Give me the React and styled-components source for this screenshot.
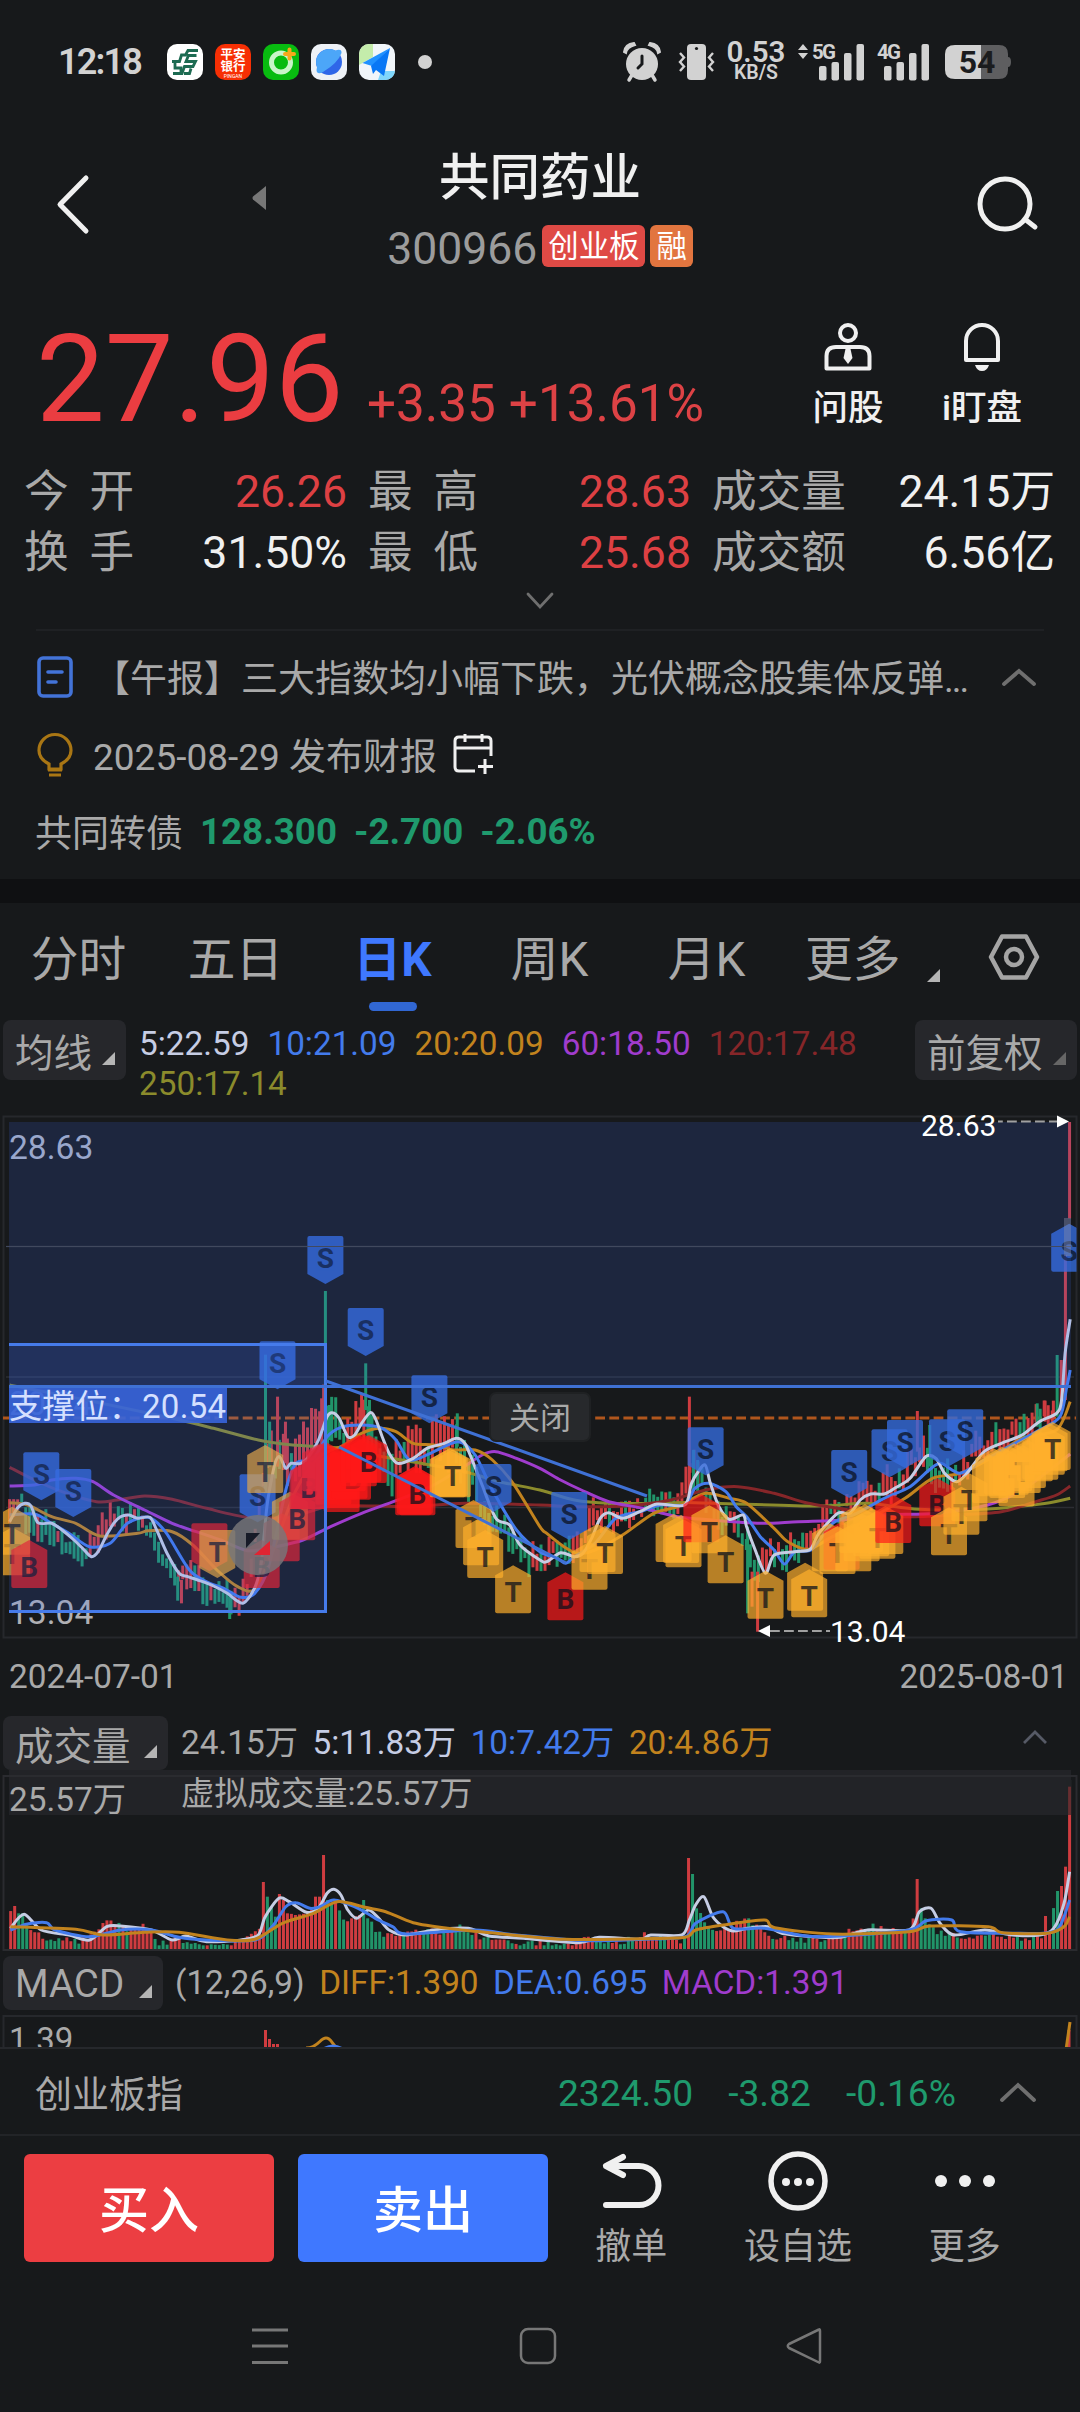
import React from "react";
import styled, { createGlobalStyle } from "styled-components";

const c = {
  bg: "#17191b",
  line: "#26282c",
  chip: "#26272b",
  grey: "#a9a9a9",
  white: "#f0f0f0",
  red: "#eb3d41",
  up: "#cf3c40",
  down: "#219469",
  green: "#1f9a6d",
  blue: "#3f78ff",
  ma5: "#c6cde4",
  ma10: "#437bec",
  ma20: "#c2831e",
  ma60: "#a03ccd",
  ma120: "#862629",
  ma250: "#8b8b2c",
};

const Global = createGlobalStyle`
  * { box-sizing: border-box; }
  body { margin: 0; background: ${c.bg}; }
  svg { display: block; flex: none; overflow: visible; }
`;

const Screen = styled.div`
  width: 1080px;
  height: 2412px;
  overflow: hidden;
  background: ${c.bg};
  color: ${c.grey};
  font-family: Roboto, "Noto Sans CJK SC", sans-serif;
  display: flex;
  flex-direction: column;
  white-space: nowrap;
`;

/* ---------- status bar ---------- */
const StatusBar = styled.div`
  height: 124px;
  flex: none;
  display: flex;
  align-items: center;
  padding: 0 68px 0 58px;
  color: #d2d2d2;
`;
const Clock = styled.div`
  width: 109px;
  font-size: 36px;
  font-weight: 600;
  letter-spacing: -1.8px;
`;
const AppIcons = styled.div`
  display: flex;
  align-items: center;
  gap: 12px;
  flex: 1;
`;
const BankIcon = styled.div`
  width: 36px;
  height: 36px;
  border-radius: 10px;
  background: #f72f04;
  color: #fff;
  font-size: 12.5px;
  font-weight: 700;
  line-height: 12px;
  text-align: center;
  padding-top: 5px;
`;
const BankLatin = styled.div`
  font-size: 5px;
  line-height: 7px;
  font-weight: 400;
`;
const Dot = styled.div`
  width: 14px;
  height: 14px;
  border-radius: 50%;
  background: #d2d2d2;
  margin-left: 11px;
`;
const SpeedBox = styled.div`
  width: 60px;
  margin: 0 12px 0 10px;
  text-align: center;
  font-weight: 600;
`;
const Speed = styled.div`
  font-size: 29.5px;
  line-height: 22px;
  margin-top: 0;
`;
const Unit = styled.div`
  font-size: 19.5px;
  line-height: 20px;
`;

/* ---------- header ---------- */
const Header = styled.div`
  height: 166px;
  flex: none;
  display: grid;
  grid-template-columns: 300px 1fr 300px;
  padding-top: 22px;
`;
const HeaderLeft = styled.div`
  display: flex;
  padding: 29px 0 0 56px;
`;
const HeaderRight = styled.div`
  display: flex;
  justify-content: flex-end;
  padding: 30px 40px 0 0;
`;
const TitleBox = styled.div`
  display: flex;
  flex-direction: column;
  align-items: center;
`;
const Title = styled.div`
  font-size: 50.5px;
  font-weight: 500;
  line-height: 63px;
  color: ${c.white};
`;
const CodeRow = styled.div`
  display: flex;
  align-items: flex-start;
  height: 42px;
  margin-top: 16px;
  gap: 5px;
`;
const Code = styled.span`
  font-size: 44.5px;
  line-height: 48px;
  color: #9c9c9c;
`;
const Tag = styled.span`
  height: 42px;
  padding: 0 6px;
  border-radius: 6px;
  background: ${(p) => p.$bg};
  color: #fff;
  font-size: 30.4px;
  line-height: 43px;
`;

/* ---------- quote ---------- */
const Quote = styled.div`
  height: 172px;
  flex: none;
  display: flex;
  padding: 27px 31px 0 36px;
  justify-content: space-between;
`;
const Prices = styled.div`
  display: flex;
  align-items: baseline;
  color: ${c.red};
  height: 124px;
`;
const Price = styled.span`
  font-size: 122.5px;
  line-height: 124px;
  width: 331px;
`;
const Change = styled.span`
  font-size: 51.2px;
  margin-right: 13px;
  color: #dd4245;
`;
const Actions = styled.div`
  display: flex;
  padding-top: 6px;
`;
const Action = styled.div`
  width: 134px;
  display: flex;
  flex-direction: column;
  align-items: center;
  color: ${c.white};
  font-size: 35.5px;
  font-weight: 500;
  line-height: 44px;
  gap: 15px;
`;

const Stats = styled.div`
  flex: none;
  display: grid;
  grid-template-columns: 323px 323px 343px;
  grid-auto-rows: 61px;
  column-gap: 21px;
  padding-left: 24px;
  font-size: 44.6px;
  line-height: 61px;
`;
const Stat = styled.div`
  display: flex;
  justify-content: space-between;
`;
const StatLabel = styled.span`
  display: flex;
  justify-content: space-between;
  min-width: 110px;
`;
const StatValue = styled.span`
  color: ${(p) => (p.$up ? "#dd4043" : c.white)};
`;
const Expand = styled.div`
  height: 47px;
  flex: none;
  display: flex;
  justify-content: center;
  align-items: flex-start;
  padding-top: 8px;
  margin: 0 36px;
  border-bottom: 2px solid #1f2124;
`;

/* ---------- news ---------- */
const News = styled.div`
  height: 248px;
  flex: none;
  padding: 7px 44px 0 36px;
  font-size: 37px;
`;
const NewsRow = styled.div`
  height: ${(p) => p.$h || 78}px;
  display: flex;
  align-items: center;
`;
const NewsText = styled.span`
  margin-left: 19px;
  margin-top: -3px;
  flex: ${(p) => (p.$grow ? 1 : "none")};
`;
const Dots = styled.span`
  letter-spacing: -2px;
`;
const BondName = styled.span`
  margin-left: -1px;
`;
const BondValue = styled.b`
  color: ${c.green};
  font-size: 36.7px;
  margin-left: 17px;
`;
const Band = styled.div`
  height: 24px;
  flex: none;
  background: #0f1012;
`;

/* ---------- tabs ---------- */
const Tabs = styled.div`
  height: 113px;
  flex: none;
  display: flex;
  padding-top: 22px;
`;
const Tab = styled.div`
  width: ${(p) => (p.$auto ? "auto" : "157px")};
  font-size: 47.7px;
  line-height: 71px;
  display: flex;
  flex-direction: column;
  align-items: center;
  color: ${(p) => (p.$on ? c.blue : c.grey)};
  font-weight: ${(p) => (p.$on ? 700 : 400)};
`;
const Underline = styled.div`
  width: 48px;
  height: 9px;
  border-radius: 5px;
  background: #3167d3;
  margin-top: 6px;
`;
const MoreTab = styled.div`
  display: flex;
  align-items: center;
  justify-content: space-between;
  width: 155px;
  height: 71px;
  padding-left: 20px;
`;

/* ---------- indicator rows ---------- */
const IndicatorRow = styled.div`
  flex: none;
  height: ${(p) => p.$h}px;
  display: flex;
  align-items: flex-start;
  padding: 4px 3px 0;
`;
const Chip = styled.div`
  flex: none;
  width: ${(p) => p.$w}px;
  height: ${(p) => p.$h || 54}px;
  background: ${c.chip};
  border-radius: 8px;
  padding: 0 11px 0 12px;
  display: flex;
  justify-content: space-between;
  align-items: center;
  font-size: 38.5px;
`;
const Corner = styled.i`
  width: 0;
  height: 0;
  margin-top: ${(p) => p.$mt || 17}px;
  border-left: 13px solid transparent;
  border-bottom: 13px solid ${(p) => (p.$dim ? "#666" : "#b5b5b5")};
`;
const Values = styled.div`
  flex: 1;
  display: flex;
  flex-wrap: wrap;
  column-gap: ${(p) => p.$gap || 14.5}px;
  margin-left: ${(p) => p.$ml || 13}px;
  padding-top: ${(p) => p.$pt || 3}px;
  font-size: 33.3px;
  line-height: 40px;
`;
const Value = styled.span`
  color: ${(p) => p.$c};
`;

/* ---------- charts ---------- */
const ChartBox = styled.div`
  position: relative;
  flex: none;
  height: 534px;
`;
const CloseButton = styled.div`
  position: absolute;
  left: 489px;
  top: 280px;
  width: 102px;
  height: 50px;
  border: 2px solid #1f2123;
  border-radius: 7px;
  background: #27292c;
  font-size: 31px;
  line-height: 50px;
  text-align: center;
`;
const Dates = styled.div`
  flex: none;
  height: 66px;
  display: flex;
  justify-content: space-between;
  padding: 0 12px 0 9px;
  font-size: 33.4px;
  line-height: 61px;
`;
const MacdBox = styled.div`
  flex: none;
  height: 35px;
  overflow: hidden;
  border-bottom: 2px solid ${c.line};
`;

/* ---------- footer ---------- */
const IndexRow = styled.div`
  flex: none;
  height: 87px;
  display: flex;
  align-items: center;
  padding: 0 44px 0 35px;
  border-bottom: 2px solid #222427;
  font-size: 37px;
`;
const IndexValues = styled.div`
  margin-left: auto;
  display: flex;
  gap: 35px;
  color: ${c.green};
  margin-right: 44px;
  font-size: 37.2px;
  padding-top: 3px;
`;
const Trade = styled.div`
  flex: none;
  height: 142px;
  display: flex;
  padding: 18px 32px 0 24px;
`;
const TradeButton = styled.div`
  width: 250px;
  height: 108px;
  border-radius: 6px;
  margin-right: ${(p) => (p.$last ? 0 : 24)}px;
  background: ${(p) => p.$bg};
  color: #fff;
  font-size: 50px;
  font-weight: 500;
  line-height: 114px;
  text-align: center;
`;
const Tool = styled.div`
  flex: 1;
  display: flex;
  flex-direction: column;
  align-items: center;
  font-size: 36px;
  line-height: 44px;
  gap: 13px;
`;
const NavBar = styled.div`
  flex: none;
  height: 136px;
  display: flex;
  justify-content: space-between;
  align-items: center;
  padding: 0 258px 0 251px;
`;

/* ---------- price chart data ---------- */
// Chart units: 2.904 per pixel across, 3 per pixel down, origin 268px below the top edge.
const X = (x) => x / 2.904;
const Y = (y) => 268 + y / 3;
const smooth = (pts) => {
  let d = `M${pts[0][0]} ${pts[0][1]}`;
  for (let i = 0; i < pts.length - 1; i++) {
    const p0 = pts[i - 1] || pts[i];
    const p1 = pts[i];
    const p2 = pts[i + 1];
    const p3 = pts[i + 2] || p2;
    const k = 7;
    d += `C${(p1[0] + (p2[0] - p0[0]) / k).toFixed(1)} ${(p1[1] + (p2[1] - p0[1]) / k).toFixed(1)} ${(p2[0] - (p3[0] - p1[0]) / k).toFixed(1)} ${(p2[1] - (p3[1] - p1[1]) / k).toFixed(1)} ${p2[0].toFixed(1)} ${p2[1].toFixed(1)}`;
  }
  return d;
};
const pairs = (s) => s.trim().split(/\s+/).map((p) => p.split(",").map(Number));
const join = (a, b) => [...pairs(a), ...pairs(b).map(([x, y]) => [x + 1568, y])];

const MA5 = join(
  "28,425 50,385 72,370 90,378 110,428 150,430 180,450 215,480 240,505 265,530 285,515 310,465 330,430 350,410 375,405 400,415 435,412 455,450 485,520 520,580 545,590 580,602 620,618 660,640 685,660 705,670 725,650 745,610 760,540 775,380 790,290 800,245 812,230 830,265 845,250 875,250 900,225 925,180 950,110 965,98 985,115 1010,170 1030,165 1050,130 1075,98 1090,115 1110,170 1130,220 1155,250 1200,235 1240,205 1290,190 1325,175 1350,190 1375,250 1400,315 1440,415 1480,435 1510,495 1568,540",
  "20,545 60,518 100,530 125,520 150,475 175,415 200,398 240,415 290,395 340,372 420,375 440,310 460,275 480,255 495,310 520,380 550,418 590,405 600,440 625,510 655,580 680,525 740,515 785,508 810,460 865,400 900,400 930,360 960,342 1000,342 1030,325 1075,295 1120,230 1150,235 1175,280 1210,305 1240,280 1290,215 1340,190 1400,165 1450,125 1500,100 1515,60 1525,-80 1540,-182"
);
const MA10 = join(
  "28,405 100,402 150,430 200,460 260,500 320,490 370,430 430,412 480,455 550,570 600,605 650,625 700,652 740,640 780,560 830,330 860,250 910,235 950,170 990,142 1050,135 1110,145 1150,180 1190,240 1250,220 1330,185 1380,225 1430,330 1500,450 1568,515",
  "50,535 75,550 100,530 160,490 220,415 290,395 350,375 420,375 450,325 490,310 540,335 570,380 600,410 640,470 680,510 710,552 740,515 790,508 850,430 920,400 1000,355 1075,320 1130,270 1165,250 1220,280 1290,240 1380,190 1450,150 1510,110 1530,20 1540,-30"
);
const MA20 = join(
  "28,368 80,375 150,410 220,430 290,468 400,460 430,452 500,455 560,495 630,570 690,620 740,628 790,520 860,330 930,230 1000,195 1050,160 1100,145 1150,155 1200,190 1260,195 1320,210 1380,210 1430,240 1490,310 1568,440",
  "20,460 70,500 110,520 160,510 240,465 330,400 400,380 480,340 550,355 600,370 680,445 720,485 780,508 850,470 950,420 1060,355 1140,295 1220,280 1300,240 1400,175 1500,150 1540,65"
);
const MA60 = join(
  "28,318 100,315 150,300 220,295 270,305 330,345 420,390 500,430 570,455 640,480 720,512 800,500 880,480 960,440 1050,400 1150,362 1250,320 1340,265 1400,225 1440,215 1500,235 1568,265",
  "60,300 120,330 200,365 300,385 400,410 500,420 640,430 750,425 880,420 1000,405 1150,400 1300,375 1400,330 1480,270 1540,222"
);
const MA120 = join(
  "28,262 100,300 180,335 280,365 340,360 420,348 500,358 600,385 720,412 850,410 950,380 1100,378 1200,380 1350,370 1568,375",
  "100,380 250,378 380,360 480,330 575,320 680,340 780,370 900,390 1050,410 1200,405 1340,395 1440,365 1500,345 1540,318"
);
const MA250 = join(
  "28,15 250,60 500,115 620,145 750,180 850,195 1000,205 1100,228 1250,255 1350,275 1450,305 1568,330",
  "100,360 200,370 330,370 450,368 800,378 950,370 1100,388 1280,388 1400,378 1480,368 1540,355"
);
const chartLines = [
  [MA250, c.ma250],
  [MA120, c.ma120],
  [MA60, c.ma60],
  [MA20, c.ma20],
  [MA10, c.ma10],
  [MA5, c.ma5],
].map(([pts, color]) => [smooth(pts.map(([x, y]) => [X(x), Y(y)])), color]);

const interp = (pts, x) => {
  for (let i = 1; i < pts.length; i++) {
    if (x <= pts[i][0]) {
      const [x0, y0] = pts[i - 1];
      const [x1, y1] = pts[i];
      return y0 + ((y1 - y0) * (x - x0)) / (x1 - x0 || 1);
    }
  }
  return pts[pts.length - 1][1];
};
const noise = (i) => {
  const v = Math.sin(i * 127.1 + 11.7) * 43758.5453;
  return v - Math.floor(v);
};

const candles = [];
for (let i = 0; i < 260; i++) {
  const x = 28 + i * 11.69;
  const lead = interp(MA5, Math.min(x + 24, 3060));
  const slope = interp(MA5, x + 28) - interp(MA5, x);
  const wild = x > 780 && x < 1400 ? 1.7 : x > 2550 && x < 2850 ? 1.2 : 1;
  const mid = lead + (noise(i) - 0.5) * 46 * wild;
  const half = (14 + noise(i + 500) * 30) * wild;
  const isUp = noise(i + 900) * 60 - 30 > slope;
  candles.push([x, mid - half, mid + half, isUp]);
}
const spikes = [
  [771, -76, 340, false], [783, 125, 260, false], [806, 50, 260, true], [829, 125, 250, true], [934, 55, 200, true],
  [945, -267, 170, false], [957, 75, 180, false], [1050, 45, 130, true], [1062, -50, 90, false], [1073, 60, 180, false],
  [1328, 100, 200, false], [516, 590, 662, false], [527, 600, 670, true], [667, 650, 717, false],
  [2002, 50, 350, true], [2014, 210, 330, false], [2026, 240, 340, false],
  [2171, 440, 700, false], [2184, 575, 680, true], [2200, 575, 755, true],
  [2664, 93, 215, true], [2700, 135, 260, false], [3012, 70, 140, false], [3035, 62, 125, true], [3059, 62, 115, true],
  [3070, -75, 110, false], [3082, -60, 100, true], [3094, -375, 60, true], [3106, -774, -485, true],
];

// Trade markers: [kind, centre x, top y, tip direction]; a lower-case kind is a buried badge without its letter.
const markers = [
  ["S", 120, 217], ["S", 213, 267], ["S", 748, 283], ["S", 806, -116], ["S", 945, -432], ["S", 1062, -216],
  ["S", 1247, -14], ["S", 1433, 252], ["S", 1653, 336], ["S", 2049, 142], ["S", 2466, 210], ["S", 2583, 148],
  ["S", 2628, 120], ["S", 2750, 118], ["S", 2803, 88], ["S", 3105, -469, "up"],
  ["T", 35, 442], ["T", 35, 380], ["B", 85, 480], ["b", 608, 430, "down"], ["T", 631, 450, "down"],
  ["B", 760, 480], ["b", 818, 400], ["t", 842, 335], ["B", 863, 337], ["T", 770, 195], ["b", 930, 215],
  ["b", 893, 243], ["B", 898, 243], ["b", 930, 190], ["b", 945, 185], ["b", 945, 190], ["b", 968, 230], ["b", 968, 215], ["b", 992, 252], ["b", 985, 215],
  ["b", 992, 240], ["b", 1015, 212], ["B", 1025, 215], ["b", 1010, 190], ["b", 1042, 175], ["b", 1042, 165], ["b", 1055, 162], ["B", 1071, 165],
  ["b", 1200, 262], ["b", 1205, 258], ["B", 1212, 262], ["t", 1300, 208], ["t", 1306, 205], ["T", 1315, 208], ["T", 1375, 360], ["t", 1397, 412],
  ["T", 1409, 450], ["T", 1490, 556], ["B", 1642, 577], ["T", 1712, 485], ["t", 1735, 432], ["T", 1757, 438],
  ["t", 1956, 402], ["t", 1978, 405], ["T", 1985, 418], ["b", 2037, 343], ["T", 2060, 376], ["T", 2107, 466], ["T", 2223, 572],
  ["t", 2338, 548], ["T", 2350, 568], ["t", 2410, 430], ["b", 2444, 425], ["T", 2432, 438], ["t", 2478, 430],
  ["t", 2490, 375], ["t", 2502, 400], ["t", 2512, 372], ["t", 2530, 385], ["T", 2548, 392], ["t", 2571, 378], ["B", 2594, 345], ["B", 2722, 295], ["T", 2756, 382],
  ["T", 2792, 320], ["T", 2815, 280], ["t", 2875, 225], ["t", 2885, 205], ["t", 2910, 200], ["t", 2925, 210], ["t", 2935, 200], ["T", 2952, 235], ["t", 2945, 190], ["T", 2970, 195],
  ["t", 2985, 180], ["t", 3005, 160], ["t", 3021, 155], ["t", 3040, 140], ["t", 3048, 130], ["T", 3057, 126],
];
const markerFill = { S: "#346adb", T: "#ffb02c", B: "#ff1819" };

const Marker = ({ kind, x, y, dir }) => {
  const letter = kind.toUpperCase();
  const up = dir ? dir === "up" : letter !== "S";
  const shape = up
    ? "M0 10 L18 0 L36 10 V46 Q36 48 34 48 H2 Q0 48 0 46Z"
    : "M0 2 Q0 0 2 0 H34 Q36 0 36 2 V38 L18 48 L0 38Z";
  return (
    <g transform={`translate(${(X(x) - 18).toFixed(1)} ${Y(y).toFixed(1)})`}>
      <path d={shape} fill={markerFill[letter]} opacity={letter === "S" ? 0.8 : 0.69} />
      {kind === letter && (
        <text x="18" y={up ? 37 : 32} fontSize="28" fontWeight="700" textAnchor="middle" fill="#0b101c" opacity=".72">
          {letter}
        </text>
      )}
    </g>
  );
};

const PriceChart = () => (
  <ChartBox>
    <svg width="1080" height="534" viewBox="0 0 1080 534" fontFamily="Roboto, 'Noto Sans CJK SC', sans-serif">
      <defs>
        <clipPath id="plot">
          <rect x="3" y="0" width="1073.5" height="534" />
        </clipPath>
      </defs>
      <rect x="3.5" y="4.5" width="1073" height="521" fill="none" stroke={c.line} strokeWidth="2" />
      <path d="M6 134.5H1074M6 265H1074M6 395.5H1074" stroke="#2c2e33" strokeWidth="1.5" />
      <path d="M3 306H1076" stroke="#b0561d" strokeWidth="3" strokeDasharray="9.8 4.3" />
      <g clipPath="url(#plot)">
        {[...candles, ...spikes].map(([x, a, b, isUp], i) => (
          <rect key={i} x={X(x) - 1.5} y={Y(a)} width="3" height={(b - a) / 3} fill={isUp ? c.up : c.down} />
        ))}
        <text x="9" y="303" fontSize="33" fill={c.grey}>20.84</text>
        {chartLines.map(([d, color]) => (
          <path key={color} d={d} fill="none" stroke={color} strokeWidth="3" strokeLinejoin="round" />
        ))}
        {markers.map(([kind, x, y, dir], i) => (
          <Marker key={i} kind={kind} x={x} y={y} dir={dir} />
        ))}
      </g>
      <text x="9" y="47" fontSize="33.6" fill="#abb2c4">28.63</text>
      <text x="9" y="512" fontSize="33.6" fill="#b0b0b4">13.04</text>
      <rect x="9" y="10" width="1062" height="264" fill="#3d70f8" opacity=".16" />
      <path d="M6 134.5H1071" stroke="#41495e" strokeWidth="1" />
      <rect x="1064" y="106" width="7" height="38" fill="#8a8fa8" opacity=".4" />
      <rect x="9" y="233" width="316" height="266" fill="#3d70f8" opacity=".16" />
      <path d="M9 232.5H325.5V499.5H9" fill="none" stroke="#467bea" strokeWidth="3" />
      <path d="M9 274.5H1071M326 269L647 384M339 335L566 451" fill="none" stroke="#3f71d5" strokeWidth="3" />
      <rect x="9" y="276" width="218" height="35" fill="#3865dc" opacity=".9" />
      <text x="9" y="306" fontSize="33" fill="#d5e0ff" textLength="217">支撑位：20.54</text>
      <circle cx="258" cy="433" r="30" fill="#77777a" opacity=".82" />
      <path d="M246 421h14l-14 15Z" fill="#171b28" />
      <path d="M270 429v14h-16Z" fill="#e02432" />
      <path d="M998 9.5H1058" stroke="#a0a0a0" strokeWidth="2" strokeDasharray="9.8 4.2" strokeDashoffset="5" />
      <path d="M1057 3.5L1069 9.5L1057 15.5Z" fill="#fff" />
      <text x="921" y="24" fontSize="30" fill="#fff">28.63</text>
      <path d="M770 519H830" stroke="#a0a0a0" strokeWidth="2" strokeDasharray="9.8 4.2" />
      <path d="M770 513L758 519L770 525Z" fill="#fff" />
      <text x="830" y="530" fontSize="30" fill="#fff">13.04</text>
    </svg>
    <CloseButton>关闭</CloseButton>
  </ChartBox>
);

/* ---------- volume chart data ---------- */
// Volume units: 1.452 per pixel across, 3 per pixel down, origin 70px above the top edge.
const VX = (x) => x / 1.452;
const VY = (y) => y / 3 - 70;
const volume = pairs(
  "12,645 20,618 30,640 45,695 75,710 110,720 135,700 152,665 165,665 185,690 210,672 230,725 260,715 290,728 350,720 365,705 375,680 380,594 385,546 392,620 397,650 403,582 412,600 420,640 430,645 445,640 455,630 461,590 467,620 472,465 478,600 485,625 490,605 497,665 510,655 520,645 530,600 536,655 545,690 570,705 620,690 640,690 665,675 700,710 760,725 820,730 860,705 870,718 900,718 930,715 936,690 942,705 995,720 1001,474 1007,522 1013,625 1025,665 1045,695 1070,660 1088,655 1110,690 1130,710 1190,715 1220,700 1265,675 1290,690 1320,690 1326,660 1332,537 1338,625 1345,655 1360,690 1380,705 1440,705 1510,710 1517,648 1523,690 1535,573 1541,558 1547,500 1553,260"
);
const greenRuns = [
  [24, 42], [64, 90], [107, 118], [170, 176], [180, 186], [222, 243], [265, 300], [304, 335], [383, 401], [424, 428],
  [447, 451], [470, 486], [493, 500], [528, 558], [582, 588], [610, 622], [640, 650], [657, 690], [700, 712], [732, 745],
  [755, 775], [790, 822], [865, 885], [898, 922], [955, 965], [993, 998], [1004, 1038], [1064, 1068], [1082, 1095],
  [1119, 1126], [1142, 1176], [1188, 1200], [1226, 1231], [1255, 1268], [1282, 1292], [1310, 1320], [1335, 1380],
  [1386, 1392], [1425, 1438], [1476, 1485], [1496, 1505], [1525, 1538],
];
const volumeBars = Array.from({ length: 265 }, (_, i) => {
  const x = 15.5 + i * 5.824;
  const near = volume.filter(([px]) => Math.abs(px - x) <= 3);
  const base = near.length ? Math.min(...near.map((p) => p[1])) : Math.max(interp(volume, x), 590);
  const calm = base > 655 ? (noise(i + 40) - 0.3) * 22 : 0;
  return [x, Math.min(base + calm, 736), greenRuns.some(([a, b]) => x >= a && x <= b)];
});
const volumeLines = [
  [
    "15,685 35,643 60,690 100,705 130,720 155,680 175,678 220,690 250,720 270,708 300,725 350,720 375,705 385,650 405,595 420,605 445,637 462,625 475,580 485,568 495,585 505,630 518,655 535,630 550,655 565,690 590,705 630,690 680,685 710,708 760,715 840,728 870,712 930,718 945,705 990,705 1001,660 1010,615 1022,590 1035,650 1050,680 1065,693 1085,685 1115,680 1135,700 1180,710 1220,712 1260,690 1320,690 1335,635 1352,625 1365,670 1385,705 1430,690 1470,705 1510,705 1530,685 1545,610 1553,515",
    c.ma5,
  ],
  [
    "15,690 40,672 68,668 80,690 130,710 175,690 220,690 260,712 300,720 370,720 395,680 415,620 430,608 450,625 465,620 485,600 520,625 545,655 570,680 590,702 690,690 750,705 850,722 930,718 995,710 1010,670 1050,635 1065,685 1110,685 1170,708 1220,708 1320,690 1345,662 1382,660 1395,695 1480,700 1515,700 1535,690 1545,650 1553,600",
    c.ma10,
  ],
  [
    "15,680 110,688 150,705 210,697 260,697 330,720 370,718 410,670 455,640 490,605 530,622 560,635 600,668 650,685 720,700 820,718 930,716 995,712 1010,690 1050,675 1110,660 1125,683 1210,702 1320,695 1350,678 1435,680 1455,698 1520,700 1545,680 1553,650",
    c.ma20,
  ],
].map(([s, color]) => [smooth(pairs(s).map(([x, y]) => [VX(x), VY(y)])), color]);

const VolumeChart = () => (
  <svg width="1080" height="182" viewBox="0 0 1080 182" fontFamily="Roboto, 'Noto Sans CJK SC', sans-serif">
    <rect x="9" y="0" width="1062" height="45" fill="#222327" />
    <rect x="3.5" y="6" width="1073" height="174" fill="none" stroke="#2a2b2f" strokeWidth="2" />
    {volumeBars.map(([x, y, isDown], i) => (
      <rect key={i} x={VX(x) - 1.5} y={VY(y)} width="3" height={179 - VY(y)} fill={isDown ? c.down : c.up} />
    ))}
    <rect x="1066" y="10" width="6" height="35" fill="#222327" opacity=".6" />
    {volumeLines.map(([d, color]) => (
      <path key={color} d={d} fill="none" stroke={color} strokeWidth="3" />
    ))}
    <text x="9" y="41" fontSize="33.3" fill={c.grey}>25.57万</text>
    <text x="181" y="35" fontSize="33.3" fill={c.grey}>虚拟成交量:25.57万</text>
  </svg>
);

/* ---------- icons ---------- */
const Chevron = ({ w = 34, h = 18, down, color = "#6f6f6f", sw = 3.8 }) => (
  <svg width={w} height={h} viewBox={`0 0 ${w} ${h}`} fill="none" stroke={color} strokeWidth={sw} strokeLinecap="round">
    <path d={down ? `M2 2L${w / 2} ${h - 3}L${w - 2} 2` : `M2 ${h - 2}L${w / 2} 3L${w - 2} ${h - 2}`} />
  </svg>
);

const Signal = ({ label, arrows }) => (
  <svg width={arrows ? 68 : 54} height="38" viewBox={arrows ? "-14 0 68 38" : "0 0 54 38"} fill="#d2d2d2">
    {arrows && <path d="M-14 7L-9 1L-4 7ZM-14 10L-9 16L-4 10Z" />}
    <text x="0" y="15.5" fontSize="20.5" fontWeight="700" fontFamily="Roboto" textLength="24">{label}</text>
    <rect x="7" y="23" width="7.5" height="14.5" rx="2" />
    <rect x="19.5" y="19" width="7.5" height="18.5" rx="2" />
    <rect x="32" y="10" width="7.5" height="27.5" rx="2" />
    <rect x="44.5" y="1" width="7.5" height="36.5" rx="2" />
  </svg>
);

const stats = [
  [["今", "开"], "26.26", true],
  [["最", "高"], "28.63", true],
  [["成交量"], "24.15万", false],
  [["换", "手"], "31.50%", false],
  [["最", "低"], "25.68", true],
  [["成交额"], "6.56亿", false],
];

export default function App() {
  return (
    <Screen>
      <Global />
      <StatusBar>
        <Clock>12:18</Clock>
        <AppIcons>
          <svg width="36" height="36" viewBox="0 0 36 36">
            <rect width="36" height="36" rx="10" fill="#fff" />
            <g fill="none" stroke="#1d6b52" strokeWidth="2.8">
              <path d="M31 6.5H21L18.5 11H14.5L12.5 17.5H5M29.5 11.5H21.5L19 17.5H28.5L26 22.5H17.5L15 29.5H6" />
              <path d="M8 19V24H14V29M24 24.5L22.5 29.5H17" />
            </g>
          </svg>
          <BankIcon>
            平安
            <br />
            银行
            <BankLatin>PINGAN</BankLatin>
          </BankIcon>
          <svg width="36" height="36" viewBox="0 0 36 36">
            <rect width="36" height="36" rx="10" fill="#08bb10" />
            <circle cx="18" cy="18.5" r="9.5" fill="none" stroke="#c9f5c9" strokeWidth="5" />
            <path d="M26.5 5.5v9M22 10h9" stroke="#f7a81b" strokeWidth="4" strokeLinecap="round" />
          </svg>
          <svg width="36" height="36" viewBox="0 0 36 36">
            <rect width="36" height="36" rx="10" fill="#eef1f6" />
            <circle cx="18" cy="18" r="13" fill="#2f66e8" />
            <path d="M6 23A13 13 0 0 1 24 6.5Q31 4 30.5 9 27 19 12 28Q4 32 6 23Z" fill="#4ca6f8" />
          </svg>
          <svg width="36" height="36" viewBox="0 0 36 36">
            <rect width="36" height="36" rx="10" fill="#f1f6fa" />
            <path d="M10 0H14V13L0 21V10A10 10 0 0 1 10 0Z" fill="#c4ecab" />
            <path d="M22 27H36A10 10 0 0 1 26 36H19Z" fill="#7fd6fb" />
            <path d="M31 4L3.5 19L13 22Z" fill="#2092ff" />
            <path d="M31 4L12 22L14 30L17 26L25 32Z" fill="#0877f5" />
          </svg>
          <Dot />
        </AppIcons>
        <svg width="38" height="40" viewBox="0 0 38 40" fill="#d2d2d2">
          <circle cx="19" cy="22" r="16" />
          <path d="M1 10Q2 2 11 1L12 3Q4 5 3 11ZM37 10Q36 2 27 1L26 3Q34 5 35 11Z" stroke="#d2d2d2" strokeWidth="2" />
          <path d="M9 33L6 38M29 33L32 38" stroke="#d2d2d2" strokeWidth="3.5" strokeLinecap="round" />
          <path d="M19 14V22L15 26" fill="none" stroke={c.bg} strokeWidth="3" strokeLinecap="round" />
        </svg>
        <svg width="38" height="38" viewBox="0 0 38 38" style={{ marginLeft: 17 }}>
          <rect x="9" y="1" width="19" height="36" rx="4" fill="#d2d2d2" />
          <circle cx="18.5" cy="5.5" r="1.6" fill={c.bg} />
          <path d="M2 10l4 4.5-4 4.5 4 4.5-4 4.5M35 10l-4 4.5 4 4.5-4 4.5 4 4.5" fill="none" stroke="#d2d2d2" strokeWidth="2.4" />
        </svg>
        <SpeedBox>
          <Speed>0.53</Speed>
          <Unit>KB/S</Unit>
        </SpeedBox>
        <Signal label="5G" arrows />
        <svg width="11" height="1" />
        <Signal label="4G" />
        <svg width="68" height="36" viewBox="-1 0 68 36" style={{ marginLeft: 13 }}>
          <path d="M36 1H54Q63 1 63 10V13Q66 13 66 18T63 23V26Q63 35 54 35H36Z" fill="#5e5e60" />
          <path d="M10 1H36V35H10Q0 35 0 26V10Q0 1 10 1Z" fill="#d2d2d2" />
          <text x="32" y="29" fontSize="32" fontWeight="700" fontFamily="Roboto" textAnchor="middle" fill="#1b1c1e">54</text>
        </svg>
      </StatusBar>

      <Header>
        <HeaderLeft>
          <svg width="34" height="60" viewBox="0 0 34 60" fill="none" stroke={c.white} strokeWidth="5" strokeLinecap="round" strokeLinejoin="round">
            <path d="M30 3L4 29.5L30 56" />
          </svg>
          <svg width="14" height="24" viewBox="0 0 14 24" style={{ margin: "11px 0 0 162px" }}>
            <path d="M14 0V24L1 13.5Q0 12 1 10.5Z" fill="#777" />
          </svg>
        </HeaderLeft>
        <TitleBox>
          <Title>共同药业</Title>
          <CodeRow>
            <Code>300966</Code>
            <Tag $bg="#df4a45">创业板</Tag>
            <Tag $bg="#e2753f">融</Tag>
          </CodeRow>
        </TitleBox>
        <HeaderRight>
          <svg width="64" height="58" viewBox="0 0 64 58" fill="none" stroke={c.white} strokeWidth="5" strokeLinecap="round">
            <circle cx="29" cy="28" r="25" />
            <path d="M50 44L59 51" />
          </svg>
        </HeaderRight>
      </Header>

      <Quote>
        <Prices>
          <Price>27.96</Price>
          <Change>+3.35</Change>
          <Change>+13.61%</Change>
        </Prices>
        <Actions>
          <Action>
            <svg width="50" height="48" viewBox="0 0 50 48" fill="none" stroke={c.white} strokeWidth="4">
              <circle cx="25" cy="10" r="8" />
              <path d="M3.5 45.5V33Q3.5 24 13 24H37Q46.5 24 46.5 33V45.5Z" strokeLinejoin="round" />
              <path d="M22.5 26h5l2 9-4.5 6-4.5-6Z" fill={c.white} stroke="none" />
            </svg>
            问股
          </Action>
          <Action>
            <svg width="40" height="48" viewBox="0 0 40 48">
              <path d="M4 37V18A16 16 0 0 1 36 18V37Z" fill="none" stroke={c.white} strokeWidth="4" strokeLinejoin="round" />
              <path d="M13 42H27Q25 48 20 48T13 42Z" fill={c.white} />
            </svg>
            i盯盘
          </Action>
        </Actions>
      </Quote>

      <Stats>
        {stats.map(([label, value, up]) => (
          <Stat key={label.join("")}>
            <StatLabel>
              {label.map((ch) => (
                <span key={ch}>{ch}</span>
              ))}
            </StatLabel>
            <StatValue $up={up}>{value}</StatValue>
          </Stat>
        ))}
      </Stats>
      <Expand>
        <Chevron w={28} h={18} down sw={2.8} />
      </Expand>

      <News>
        <NewsRow>
          <svg width="38" height="42" viewBox="0 0 38 42" fill="none" stroke="#4373d8" strokeWidth="3.6" strokeLinecap="round">
            <rect x="3" y="2" width="32" height="38" rx="4" />
            <path d="M12 16H26M12 26H20" />
          </svg>
          <NewsText $grow>
            【午报】三大指数均小幅下跌，光伏概念股集体反弹<Dots>...</Dots>
          </NewsText>
          <Chevron />
        </NewsRow>
        <NewsRow>
          <svg width="38" height="44" viewBox="0 0 38 44" fill="none" stroke="#a97614" strokeWidth="3.2">
            <path d="M13 36V31Q3 26 3 17.5A16 16 0 0 1 35 17.5Q35 26 25 31V36Z" />
            <path d="M12 37H26M13 42H25" />
          </svg>
          <NewsText>2025-08-29 发布财报</NewsText>
          <svg width="42" height="42" viewBox="0 0 42 42" fill="none" stroke={c.white} strokeWidth="3" style={{ marginLeft: 16, marginTop: -2 }}>
            <path d="M22 38H6Q2 38 2 34V8Q2 4 6 4H34Q38 4 38 8V23M2 15H38M12 1V9M29 1V9M32 26V41M25 33.5H40" />
          </svg>
        </NewsRow>
        <NewsRow $h={74}>
          <BondName>共同转债</BondName>
          <BondValue>128.300</BondValue>
          <BondValue>-2.700</BondValue>
          <BondValue>-2.06%</BondValue>
        </NewsRow>
      </News>
      <Band />

      <Tabs>
        <Tab>分时</Tab>
        <Tab>五日</Tab>
        <Tab $on>
          日K
          <Underline />
        </Tab>
        <Tab>周K</Tab>
        <Tab>月K</Tab>
        <MoreTab>
          <Tab $auto>更多</Tab>
          <Corner $mt={30} />
        </MoreTab>
        <svg width="54" height="50" viewBox="0 0 54 50" fill="none" stroke="#a5a5a5" strokeWidth="4.5" style={{ margin: "7px 0 0 47px" }}>
          <path d="M15 4.5H39L50 25L39 45.5H15L4 25Z" strokeLinejoin="round" />
          <circle cx="27" cy="25" r="8" />
        </svg>
      </Tabs>

      <IndicatorRow $h={96}>
        <Chip $w={123} $h={60}>均线<Corner /></Chip>
        <Values $gap={18} $ml={13} $pt={4}>
          <Value $c={c.ma5}>5:22.59</Value>
          <Value $c={c.ma10}>10:21.09</Value>
          <Value $c={c.ma20}>20:20.09</Value>
          <Value $c={c.ma60}>60:18.50</Value>
          <Value $c={c.ma120}>120:17.48</Value>
          <Value $c={c.ma250}>250:17.14</Value>
        </Values>
        <Chip $w={162} $h={60}>前复权<Corner $dim /></Chip>
      </IndicatorRow>

      <PriceChart />
      <Dates>
        <span>2024-07-01</span>
        <span>2025-08-01</span>
      </Dates>

      <IndicatorRow $h={58}>
        <Chip $w={165}>成交量<Corner /></Chip>
        <Values $pt={7}>
          <Value $c={c.grey}>24.15万</Value>
          <Value $c={c.ma5}>5:11.83万</Value>
          <Value $c={c.ma10}>10:7.42万</Value>
          <Value $c={c.ma20}>20:4.86万</Value>
        </Values>
        <svg width="24" height="14" viewBox="0 0 24 14" fill="none" stroke="#565a66" strokeWidth="2.8" style={{ margin: "14px 30px 0 0" }}>
          <path d="M1 13L12 2L23 13" />
        </svg>
      </IndicatorRow>
      <VolumeChart />

      <IndicatorRow $h={62}>
        <Chip $w={160}>MACD<Corner /></Chip>
        <Values $pt={7} $ml={12}>
          <Value $c={c.grey}>(12,26,9)</Value>
          <Value $c={c.ma20}>DIFF:1.390</Value>
          <Value $c={c.ma10}>DEA:0.695</Value>
          <Value $c={c.ma60}>MACD:1.391</Value>
        </Values>
      </IndicatorRow>
      <MacdBox>
        <svg width="1080" height="50" viewBox="0 0 1080 50" fontFamily="Roboto">
          <path d="M3.5 50V2H1076.5V50" fill="none" stroke={c.line} strokeWidth="2" />
          <path d="M265.5 16V40M269.5 25V40M273.5 30V40M277.5 30V40" stroke={c.up} strokeWidth="3" />
          <path d="M306 34C318 34 320 24 326 24S332 32 340 36" fill="none" stroke={c.ma20} strokeWidth="3" />
          <path d="M322 36Q333 28 344 36" fill="none" stroke={c.ma10} strokeWidth="3" />
          <path d="M1069 16V40" stroke={c.up} strokeWidth="3" />
          <path d="M1066 36L1070 8" stroke={c.ma20} strokeWidth="3" />
          <text x="9" y="37" fontSize="33" fill={c.grey}>1.39</text>
        </svg>
      </MacdBox>

      <IndexRow>
        创业板指
        <IndexValues>
          <span>2324.50</span>
          <span>-3.82</span>
          <span>-0.16%</span>
        </IndexValues>
        <Chevron w={36} h={20} />
      </IndexRow>

      <Trade>
        <TradeButton $bg="#ec3e42">买入</TradeButton>
        <TradeButton $bg={c.blue} $last>卖出</TradeButton>
        <Tool>
          <svg width="60" height="60" viewBox="0 0 60 60" fill="none" stroke={c.white} strokeWidth="6" strokeLinecap="round" strokeLinejoin="round" style={{ marginTop: -3, marginBottom: 1 }}>
            <path d="M22 6L5 15L22 24M5 15H38A19.5 19.5 0 0 1 38 54H5" />
          </svg>
          撤单
        </Tool>
        <Tool>
          <svg width="60" height="60" viewBox="0 0 60 60" style={{ marginTop: -3, marginBottom: 1 }}>
            <circle cx="30" cy="30" r="27" fill="none" stroke={c.white} strokeWidth="5.5" />
            <g fill={c.white}>
              <circle cx="18" cy="31" r="4" />
              <circle cx="30" cy="31" r="4" />
              <circle cx="42" cy="31" r="4" />
            </g>
          </svg>
          设自选
        </Tool>
        <Tool>
          <svg width="62" height="60" viewBox="0 0 62 60" fill={c.white} style={{ marginTop: -3, marginBottom: 1 }}>
            <circle cx="7" cy="30" r="6" />
            <circle cx="31" cy="30" r="6" />
            <circle cx="55" cy="30" r="6" />
          </svg>
          更多
        </Tool>
      </Trade>

      <NavBar>
        <svg width="38" height="38" viewBox="0 0 38 38" stroke="#777" strokeWidth="3">
          <path d="M1 3H37M1 19H37M1 35.5H37" />
        </svg>
        <svg width="38" height="38" viewBox="0 0 38 38" fill="none" stroke="#777" strokeWidth="2.5">
          <rect x="2" y="2" width="34" height="34" rx="7" />
        </svg>
        <svg width="36" height="38" viewBox="0 0 36 38" fill="none" stroke="#777" strokeWidth="2.5" strokeLinejoin="round">
          <path d="M33 2.5Q34 2 34 4V34Q34 36 33 35.5L3 21Q0.5 19 3 17Z" />
        </svg>
      </NavBar>
    </Screen>
  );
}
